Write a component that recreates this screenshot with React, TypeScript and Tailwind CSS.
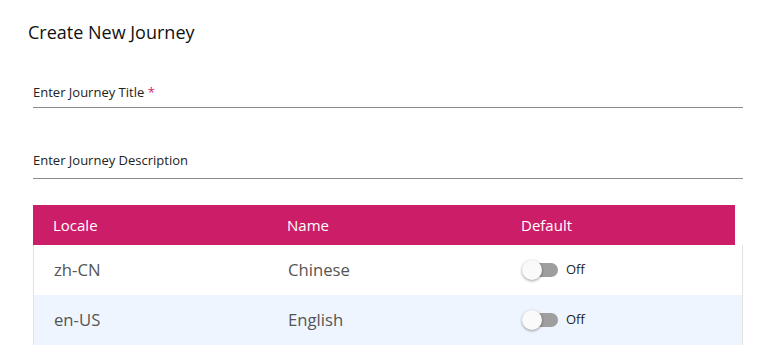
import React from "react";

type Locale = {
  code: string;
  name: string;
  isDefault: boolean;
};

const locales: Locale[] = [
  { code: "zh-CN", name: "Chinese", isDefault: false },
  { code: "en-US", name: "English", isDefault: false },
];

function Toggle({ on }: { on: boolean }) {
  return (
    <div className="flex items-center gap-2">
      <div className="relative w-[36px] h-[20px] flex items-center">
        <div className="ml-[4px] w-[32px] h-[14px] rounded-full bg-[#9e9e9e]" />
        <div className="absolute left-0 top-0 w-[20px] h-[20px] rounded-full bg-[#fafafa] shadow-[0_1px_3px_rgba(0,0,0,0.4)]" />
      </div>
      <span className="text-[13px] text-[#222]">{on ? "On" : "Off"}</span>
    </div>
  );
}

function Field({
  label,
  required,
  pad,
}: {
  label: string;
  required?: boolean;
  pad: string;
}) {
  return (
    <div className={`ml-[33px] w-[710px] border-b border-[#8a8a8a] ${pad}`}>
      <p className="text-[13px] text-[#222] leading-[18px]">
        {label}
        {required && <span className="text-[#cc1e68]"> *</span>}
      </p>
    </div>
  );
}

export default function App() {
  return (
    <div
      className="w-[765px] h-[347px] bg-white overflow-hidden"
      style={{ fontFamily: '"Open Sans", sans-serif' }}
    >
      <h1 className="pl-[28px] pt-[20px] text-[18px] leading-[24px] font-medium text-[#111]">
        Create New Journey
      </h1>

      <div className="mt-[39px] flex flex-col gap-[43px]">
        <Field label="Enter Journey Title" required pad="pb-[6px]" />
        <Field label="Enter Journey Description" pad="pb-[9px]" />
      </div>

      <div className="ml-[33px] mt-[26px] w-[710px]">
        <div className="w-[702px] h-[40px] bg-[#cc1e68] grid grid-cols-3 items-center text-[15px] text-white">
          <div className="pl-[20px]">Locale</div>
          <div className="pl-[20px]">Name</div>
          <div className="pl-[20px]">Default</div>
        </div>
        <div className="border-x border-[#e2e2e2]">
          {locales.map((l, i) => (
            <div
              key={l.code}
              className={`h-[50px] grid grid-cols-[234px_234px_1fr] items-center text-[16.7px] text-[#555] ${
                i % 2 === 1 ? "bg-[#eef5fe]" : "bg-white"
              }`}
            >
              <div className="pl-[20px]">{l.code}</div>
              <div className="pl-[20px]">{l.name}</div>
              <div className="pl-[20px]">
                <Toggle on={l.isDefault} />
              </div>
            </div>
          ))}
        </div>
      </div>
    </div>
  );
}
